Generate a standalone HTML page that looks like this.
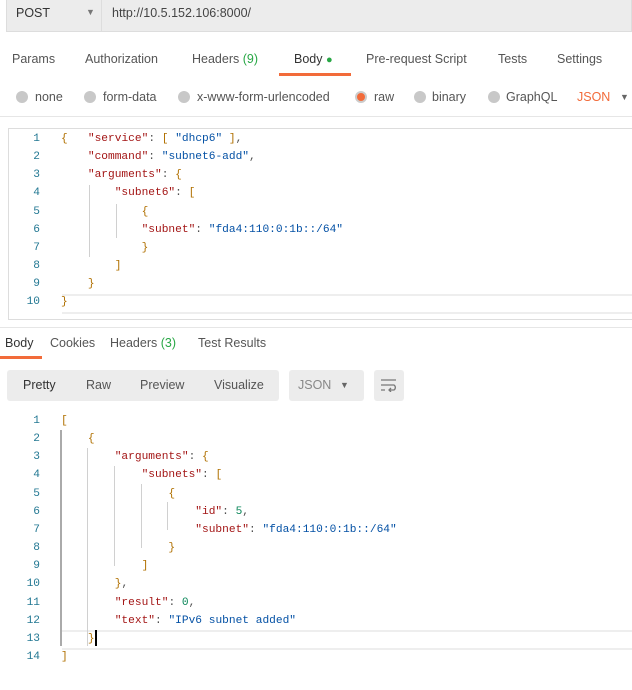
<!DOCTYPE html><html><head><style>
body{margin:0;width:632px;height:690px;background:#fff;font-family:"Liberation Sans",sans-serif;position:relative;overflow:hidden;color:#505050}
.a{position:absolute;white-space:pre}
.mono{font-family:"Liberation Mono",monospace;font-size:11.2px}
.ln{position:absolute;width:40px;text-align:right;color:#237893;font-family:"Liberation Mono",monospace;font-size:11.2px}
.k{color:#a31515}.s{color:#0451a5}.n{color:#098658}.p{color:#333}.b{color:#b07000}
.t{font-size:12.5px;color:#555}
.rd{position:absolute;width:12px;height:12px;border-radius:50%;background:#c8c8c8;top:91px}
.g{position:absolute;width:1px;background:#d0d0d0}
</style></head><body>
<div class="a" style="left:6px;top:0;width:626px;height:32px;background:#ececec;border:1px solid #ddd;border-top:none;box-sizing:border-box"></div>
<div class="a" style="left:101px;top:0;width:1px;height:32px;background:#ddd"></div>
<div class="a t" style="left:16px;top:6px;color:#333">POST</div>
<div class="a" style="left:86px;top:7px;font-size:9px;color:#777">▼</div>
<div class="a t" style="left:112px;top:6px;color:#444">http://10.5.152.106:8000/</div>
<div class="a t" style="left:12px;top:52px">Params</div>
<div class="a t" style="left:85px;top:52px">Authorization</div>
<div class="a t" style="left:192px;top:52px">Headers <span style="color:#28a745">(9)</span></div>
<div class="a t" style="left:294px;top:52px;color:#333">Body <span style="color:#28a745;font-size:11px">●</span></div>
<div class="a" style="left:279px;top:73px;width:72px;height:3px;background:#f26b3a"></div>
<div class="a t" style="left:366px;top:52px">Pre-request Script</div>
<div class="a t" style="left:498px;top:52px">Tests</div>
<div class="a t" style="left:557px;top:52px">Settings</div>
<div class="rd" style="left:16px"></div><div class="a t" style="left:35px;top:90px">none</div>
<div class="rd" style="left:84px"></div><div class="a t" style="left:103px;top:90px">form-data</div>
<div class="rd" style="left:178px"></div><div class="a t" style="left:197px;top:90px">x-www-form-urlencoded</div>
<div class="rd" style="left:355px;background:#f26b3a;border:2px solid #ccc;width:8px;height:8px"></div><div class="a t" style="left:374px;top:90px">raw</div>
<div class="rd" style="left:414px"></div><div class="a t" style="left:432px;top:90px">binary</div>
<div class="rd" style="left:488px"></div><div class="a t" style="left:506px;top:90px">GraphQL</div>
<div class="a t" style="left:577px;top:90px;color:#f26b3a">JSON</div>
<div class="a" style="left:620px;top:92px;font-size:9px;color:#666">▼</div>
<div class="a" style="left:0;top:116px;width:632px;height:1px;background:#e6e6e6"></div>
<div class="a" style="left:8px;top:128px;width:630px;height:192px;border:1px solid #ddd;box-sizing:border-box"></div>
<div class="a" style="left:62px;top:294px;width:570px;height:16px;border-top:2px solid #eee;border-bottom:2px solid #eee"></div>
<div class="g" style="left:89px;top:185px;height:72px"></div>
<div class="g" style="left:116px;top:204px;height:34px"></div>
<div id="top"></div>
<div class="a" style="left:0;top:327px;width:632px;height:1px;background:#e6e6e6"></div>
<div class="a t" style="left:5px;top:336px;color:#333">Body</div>
<div class="a" style="left:0;top:356px;width:42px;height:3px;background:#f26b3a"></div>
<div class="a t" style="left:50px;top:336px">Cookies</div>
<div class="a t" style="left:110px;top:336px">Headers <span style="color:#28a745">(3)</span></div>
<div class="a t" style="left:198px;top:336px">Test Results</div>
<div class="a" style="left:7px;top:370px;width:272px;height:31px;background:#ececec;border-radius:3px"></div>
<div class="a t" style="left:23px;top:378px;color:#333">Pretty</div>
<div class="a t" style="left:86px;top:378px">Raw</div>
<div class="a t" style="left:140px;top:378px">Preview</div>
<div class="a t" style="left:214px;top:378px">Visualize</div>
<div class="a" style="left:289px;top:370px;width:75px;height:31px;background:#ececec;border-radius:3px"></div>
<div class="a t" style="left:298px;top:378px;color:#888">JSON</div>
<div class="a" style="left:340px;top:380px;font-size:9px;color:#666">▼</div>
<div class="a" style="left:374px;top:370px;width:30px;height:31px;background:#ececec;border-radius:3px"></div>
<svg class="a" style="left:380px;top:378px" width="18" height="14"><path d="M1 2H16M1 7H14a3 3 0 0 1 0 5H9M1 12H5M11 10l-2 2 2 2" stroke="#777" stroke-width="1.3" fill="none"/></svg>
<div class="a" style="left:62px;top:630px;width:570px;height:16px;border-top:2px solid #eee;border-bottom:2px solid #eee"></div>
<div class="a" style="left:60px;top:430px;width:2px;height:216px;background:#aaa"></div>
<div class="g" style="left:87px;top:448px;height:198px"></div>
<div class="g" style="left:114px;top:466px;height:100px"></div>
<div class="g" style="left:141px;top:484px;height:64px"></div>
<div class="g" style="left:167px;top:502px;height:28px"></div>
<div class="a" style="left:95px;top:630px;width:2px;height:16px;background:#000"></div>
<div id="bot"></div>
<script>
function ed(id,y0,lines){let h='';lines.forEach((l,i)=>{const y=y0+i*18.15;h+=`<div class="ln" style="left:0;top:${y}px">${i+1}</div><div class="a mono" style="left:61px;top:${y}px">${l}</div>`});document.getElementById(id).outerHTML=h}
const K=s=>`<span class="k">"${s}"</span>`,S=s=>`<span class="s">"${s}"</span>`,N=s=>`<span class="n">${s}</span>`,B=s=>`<span class="b">${s}</span>`;
ed('top',133,[`${B('{')}   ${K('service')}: ${B('[')} ${S('dhcp6')} ${B(']')},`,`    ${K('command')}: ${S('subnet6-add')},`,`    ${K('arguments')}: ${B('{')}`,`        ${K('subnet6')}: ${B('[')}`,`            ${B('{')}`,`            ${K('subnet')}: ${S('fda4:110:0:1b::/64')}`,`            ${B('}')}`,`        ${B(']')}`,`    ${B('}')}`,B('}')]);
ed('bot',415,[B('['),`    ${B('{')}`,`        ${K('arguments')}: ${B('{')}`,`            ${K('subnets')}: ${B('[')}`,`                ${B('{')}`,`                    ${K('id')}: ${N('5')},`,`                    ${K('subnet')}: ${S('fda4:110:0:1b::/64')}`,`                ${B('}')}`,`            ${B(']')}`,`        ${B('}')},`,`        ${K('result')}: ${N('0')},`,`        ${K('text')}: ${S('IPv6 subnet added')}`,`    ${B('}')}`,B(']')]);
</script>
</body></html>
